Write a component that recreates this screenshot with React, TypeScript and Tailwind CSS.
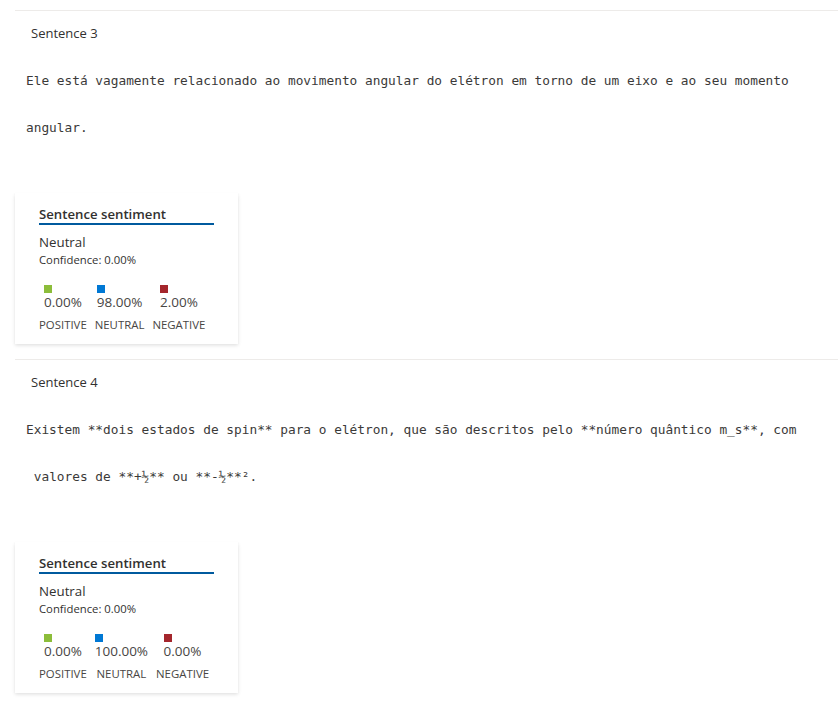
import React from 'react';

type Sentence = {
  label: string;
  text: string;
  scores: { positive: string; neutral: string; negative: string };
};

const sentences: Sentence[] = [
  {
    label: "Sentence 3",
    text: "Ele está vagamente relacionado ao movimento angular do elétron em torno de um eixo e ao seu momento angular.",
    scores: { positive: "0.00%", neutral: "98.00%", negative: "2.00%" }
  },
  {
    label: "Sentence 4",
    text: "Existem **dois estados de spin** para o elétron, que são descritos pelo **número quântico m_s**, com\n valores de **+½** ou **-½**².",
    scores: { positive: "0.00%", neutral: "100.00%", negative: "0.00%" }
  }
];

const ScoreCol = ({ color, value, name }: { color: string; value: string; name: string }) => (
  <div className="flex flex-col items-center">
    <div className="flex flex-col items-start">
      <span className={`w-[8px] h-[8px] ${color}`} />
      <span className="text-[13.5px] leading-[18px] text-[#484644]">{value}</span>
    </div>
    <span className="mt-[6px] text-[11.4px] leading-[16px] text-[#484644]">{name}</span>
  </div>
);

const SentimentCard = ({ scores }: { scores: Sentence["scores"] }) => (
  <div className="w-[223px] bg-white px-[24px] pt-[12px] pb-[11px] shadow-[0_1.6px_3.6px_rgba(0,0,0,0.13),0_0.3px_0.9px_rgba(0,0,0,0.11)]">
    <div className="border-b-2 border-[#005a9e] text-[13.2px] leading-[18px] font-semibold text-[#323130]">
      Sentence sentiment
    </div>
    <div className="mt-[8px] text-[13.3px] leading-[18px] text-[#323130]">Neutral</div>
    <div className="mt-[2px] text-[11.3px] leading-[14px] text-[#323130]">Confidence: 0.00%</div>
    <div className="mt-[18px] flex gap-[8px]">
      <ScoreCol color="bg-[#8cbd3a]" value={scores.positive} name="POSITIVE" />
      <ScoreCol color="bg-[#0078d4]" value={scores.neutral} name="NEUTRAL" />
      <ScoreCol color="bg-[#a4262c]" value={scores.negative} name="NEGATIVE" />
    </div>
  </div>
);

export default function App() {
  return (
    <div className="w-[839px] h-[704px] overflow-hidden bg-white pt-[10px] font-['Segoe_UI','Open_Sans',sans-serif]">
      {sentences.map((s) => (
        <section key={s.label} className="ml-[15px] mr-[1px] h-[349px] border-t border-[#edebe9]">
          <div className="mt-[12px] pl-[16px] text-[13px] leading-[20px] text-[#323130]">{s.label}</div>
          <p className="mt-[14px] pl-[11px] w-[820px] whitespace-pre-wrap font-['DejaVu_Sans_Mono',monospace] text-[12.8px] leading-[47px] text-[#3b3a39]">
            {s.text}
          </p>
          <div className="mt-[42px]">
            <SentimentCard scores={s.scores} />
          </div>
        </section>
      ))}
    </div>
  );
}
